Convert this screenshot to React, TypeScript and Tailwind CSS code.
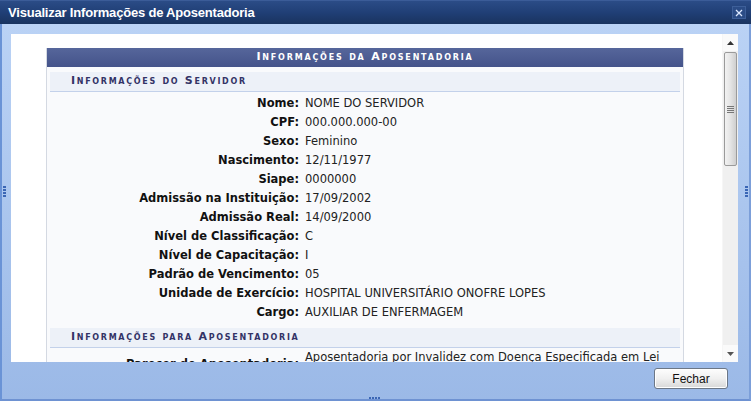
import React from "react";

const servidor: [string, string][] = [
  ["Nome:", "NOME DO SERVIDOR"],
  ["CPF:", "000.000.000-00"],
  ["Sexo:", "Feminino"],
  ["Nascimento:", "12/11/1977"],
  ["Siape:", "0000000"],
  ["Admissão na Instituição:", "17/09/2002"],
  ["Admissão Real:", "14/09/2000"],
  ["Nível de Classificação:", "C"],
  ["Nível de Capacitação:", "I"],
  ["Padrão de Vencimento:", "05"],
  ["Unidade de Exercício:", "HOSPITAL UNIVERSITÁRIO ONOFRE LOPES"],
  ["Cargo:", "AUXILIAR DE ENFERMAGEM"],
];

function SubHeader({ title }: { title: string }) {
  return (
    <div className="h-[20px] bg-[#edf1f8] border-b border-[#c3d1ea] pl-[21px] flex items-center text-[11px] font-bold text-[#333366] tracking-[1.7px] [font-variant:small-caps]">
      {title}
    </div>
  );
}

function Row({ label, value }: { label: string; value: string }) {
  return (
    <div className="grid grid-cols-[249px_1fr] gap-[6px] h-[19px] items-center">
      <div className="text-right font-bold text-[#111]">{label}</div>
      <div className="text-[#222]">{value}</div>
    </div>
  );
}

function Grip({ className }: { className: string }) {
  return (
    <div className={"absolute flex flex-col gap-[1px] " + className}>
      <span className="w-[3px] h-[2px] bg-[#3b66b5]" />
      <span className="w-[3px] h-[2px] bg-[#3b66b5]" />
      <span className="w-[3px] h-[2px] bg-[#3b66b5]" />
      <span className="w-[3px] h-[2px] bg-[#3b66b5]" />
    </div>
  );
}

function Scrollbar() {
  return (
    <div className="w-[16px] h-full flex flex-col bg-[#f0f0f0] border-l border-[#f6f6f6]">
      <div className="h-[17px] bg-[#fafafa] flex items-center justify-center">
        <svg width="7" height="4" viewBox="0 0 7 4">
          <path d="M0 4 L3.5 0 L7 4 Z" fill="#333" />
        </svg>
      </div>
      <div className="mx-[1px] mt-[1px] h-[114px] rounded-[2px] border border-[#9a9a9a] bg-gradient-to-r from-[#f2f2f2] via-[#e4e4e4] to-[#cfcfcf] flex flex-col items-center justify-center gap-[1px]">
        <span className="w-[7px] h-[1px] bg-[#777]" />
        <span className="w-[7px] h-[1px] bg-[#777]" />
        <span className="w-[7px] h-[1px] bg-[#777]" />
        <span className="w-[7px] h-[1px] bg-[#777]" />
      </div>
      <div className="flex-1" />
      <div className="h-[17px] bg-[#fafafa] flex items-center justify-center">
        <svg width="7" height="4" viewBox="0 0 7 4">
          <path d="M0 0 L3.5 4 L7 0 Z" fill="#555" />
        </svg>
      </div>
    </div>
  );
}

export default function App() {
  return (
    <div className="w-[751px] h-[401px] relative overflow-hidden flex flex-col font-['DejaVu_Sans',sans-serif] text-[11.5px]">
      <div className="h-[24px] shrink-0 flex items-center justify-between pl-[8px] pr-[5px] bg-gradient-to-b from-[#2b4c87] via-[#203f76] to-[#19335f] border-t border-[#3b5c98]">
        <span className="text-white font-bold text-[13px] font-['Liberation_Sans',sans-serif] tracking-[-0.2px]">
          Visualizar Informações de Aposentadoria
        </span>
        <div className="w-[14px] h-[13px] bg-[#2b4c86] border border-[#3d5f99] flex items-center justify-center">
          <svg width="8" height="8" viewBox="0 0 8 8">
            <path d="M1 1 L7 7 M7 1 L1 7" stroke="#dce8ff" strokeWidth="1.3" />
          </svg>
        </div>
      </div>

      <div className="flex-1 flex flex-col border-l-2 border-[#6a93d6] border-r-2 border-r-[#7c9fd9] border-b-2 border-b-[#6e92d2] bg-gradient-to-b from-[#bad2f5] to-[#9bb9e7]">
        <div className="mt-[10px] ml-[9px] mr-[11px] h-[328px] bg-white flex overflow-hidden">
          <div className="flex-1 overflow-hidden pl-[35px] pt-[14px]">
            <div className="w-[638px] bg-[#f9fafc] border-x border-[#d4d9e2]">
              <div className="h-[19px] bg-gradient-to-b from-[#56669b] to-[#44538a] flex items-center justify-center text-white font-bold text-[11px] tracking-[1.8px] [font-variant:small-caps]">
                Informações da Aposentadoria
              </div>
              <div className="px-[3px] pt-[5px] pb-[4px]">
                <SubHeader title="Informações do Servidor" />
                <div className="pt-[2px]">
                  {servidor.map(([l, v]) => (
                    <Row key={l} label={l} value={v} />
                  ))}
                </div>
                <div className="mt-[6px]">
                  <SubHeader title="Informações para Aposentadoria" />
                </div>
                <div className="grid grid-cols-[249px_1fr] gap-[6px] items-center py-[2px]">
                  <div className="text-right font-bold text-[#111]">Parecer de Aposentadoria:</div>
                  <div className="text-[#222] leading-[15px]">
                    Aposentadoria por Invalidez com Doença Especificada em Lei
                    <br />
                    Nº 8.112/90, art. 186
                  </div>
                </div>
              </div>
            </div>
          </div>
          <Scrollbar />
        </div>
        <div className="flex justify-end pr-[21px] pt-[6px]">
          <button
            type="button"
            className="w-[74px] h-[21px] rounded-[3px] border border-[#6c7786] bg-gradient-to-b from-[#fdfdfd] via-[#f0f0f0] to-[#d8d8d8] text-[12px] text-[#111] font-['Liberation_Sans',sans-serif] shadow-[inset_0_0_0_1px_#ffffff]"
          >
            Fechar
          </button>
        </div>
      </div>

      <Grip className="left-[3px] top-[186px]" />
      <Grip className="right-[3px] top-[186px]" />
      <div className="absolute bottom-[2px] left-[369px] flex gap-[1px]">
        <span className="w-[2px] h-[2px] bg-[#3b66b5]" />
        <span className="w-[2px] h-[2px] bg-[#3b66b5]" />
        <span className="w-[2px] h-[2px] bg-[#3b66b5]" />
        <span className="w-[2px] h-[2px] bg-[#3b66b5]" />
      </div>
    </div>
  );
}
